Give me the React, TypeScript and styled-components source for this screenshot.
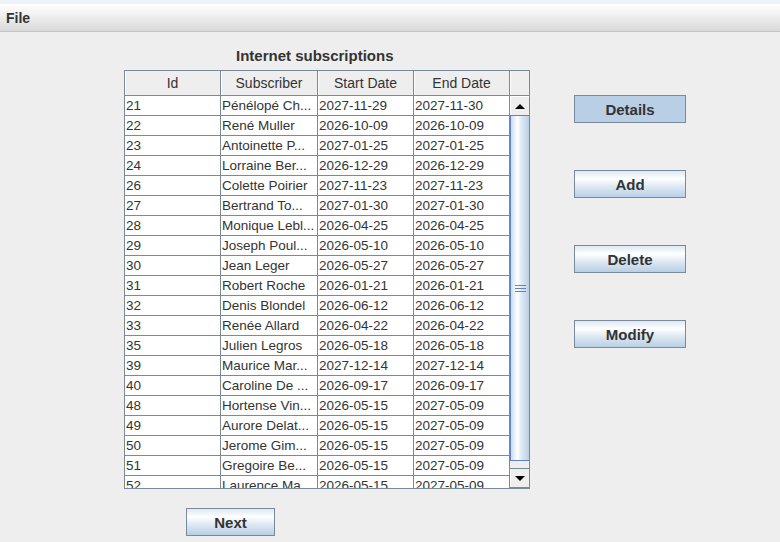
import React from 'react';
import styled, { createGlobalStyle } from 'styled-components';

const GlobalStyle = createGlobalStyle`
    html, body {
        margin: 0;
        padding: 0;
        background: #eeeeee;
        font-family: "Liberation Sans", Arial, sans-serif;
        color: #333333;
    }
`;

const Frame = styled.div`
    width: 780px;
    height: 542px;
    overflow: hidden;
    background: #eeeeee;
`;

const TopStrip = styled.div`
    height: 4px;
    background: #edf3f9;
`;

const MenuBar = styled.div`
    display: flex;
    align-items: center;
    height: 27px;
    background: linear-gradient(#ffffff, #dadada);
    border-bottom: 1px solid #c4c4c4;
`;

const MenuItem = styled.div`
    padding: 0 6px;
    font-size: 14px;
    font-weight: bold;
    color: #333333;
`;

const Main = styled.div`
    display: flex;
    padding-left: 124px;
`;

const LeftColumn = styled.div`
    display: flex;
    flex-direction: column;
    width: 406px;
`;

const Title = styled.div`
    margin: 15px 0 5px 112px;
    line-height: 18px;
    font-size: 15px;
    font-weight: bold;
    color: #333333;
`;

const ScrollPane = styled.div`
    display: grid;
    grid-template-columns: 385px 19px;
    grid-template-rows: 25px 392px;
    border: 1px solid #7a8a99;
    background: #eeeeee;
`;

const HeaderRow = styled.div`
    display: flex;
    border-bottom: 1px solid #7a8a99;
`;

const HeaderCell = styled.div<{ $w: number }>`
    width: ${p => p.$w}px;
    box-sizing: border-box;
    padding-top: 1px;
    border-right: 1px solid #7a8a99;
    box-shadow: inset 1px 0 0 #ffffff;
    text-align: center;
    font-size: 14px;
    line-height: 23px;
    color: #333333;
`;

const Corner = styled.div`
    border-bottom: 1px solid #7a8a99;
    box-shadow: inset 1px 0 0 #ffffff;
`;

const Viewport = styled.div`
    overflow: hidden;
    background: #ffffff;
`;

const Row = styled.div`
    display: flex;
`;

const Cell = styled.div<{ $w: number }>`
    width: ${p => p.$w}px;
    box-sizing: border-box;
    height: 20px;
    padding: 1px 0 0 1px;
    border-right: 1px solid #7a8a99;
    border-bottom: 1px solid #7a8a99;
    font-size: 13.5px;
    line-height: 18px;
    white-space: nowrap;
    overflow: hidden;
    color: #333333;
`;

const ScrollBar = styled.div`
    display: flex;
    flex-direction: column;
    background: #eeeeee;
`;

const ArrowButton = styled.div<{ $down?: boolean }>`
    display: flex;
    align-items: center;
    justify-content: center;
    height: ${p => (p.$down ? 20 : 19)}px;
    box-sizing: border-box;
    background: #eeeeee;
    border-top: ${p => (p.$down ? '1px solid #7a8a99' : '1px solid #ffffff')};
    border-bottom: ${p => (p.$down ? '1px solid #7a8a99' : 'none')};
    box-shadow: inset 1px 0 0 #ffffff;
`;

const Arrow = styled.div<{ $down?: boolean }>`
    width: 0;
    height: 0;
    border-left: 5px solid transparent;
    border-right: 5px solid transparent;
    ${p => (p.$down ? 'border-top: 5px solid #000;' : 'border-bottom: 5px solid #000;')}
`;

const Thumb = styled.div`
    display: flex;
    flex-direction: column;
    align-items: center;
    justify-content: center;
    gap: 2px;
    height: 346px;
    box-sizing: border-box;
    border-left: 1px solid #6382bf;
    border-top: 1px solid #6382bf;
    border-bottom: 1px solid #6382bf;
    background: linear-gradient(90deg, #c8ddf2 0%, #ffffff 35%, #dde8f3 60%, #b8cfe5 100%);
`;

const Grip = styled.div`
    width: 11px;
    height: 1px;
    background: #6382bf;
`;

const Track = styled.div`
    flex: 1;
`;

const RightColumn = styled.div`
    display: flex;
    flex-direction: column;
    gap: 47px;
    padding-top: 63px;
    margin-left: 44px;
`;

const Button = styled.button<{ $w: number; $selected?: boolean }>`
    width: ${p => p.$w}px;
    height: 28px;
    padding: 0;
    border: 1px solid #7a8a99;
    border-radius: 0;
    background: ${p =>
        p.$selected
            ? '#b8cfe5'
            : 'linear-gradient(#dde8f3 0%, #ffffff 30%, #dde8f3 60%, #b8cfe5 100%)'};
    font-family: "Liberation Sans", Arial, sans-serif;
    font-size: 15px;
    font-weight: bold;
    color: #333333;
`;

const NextButton = styled(Button)`
    margin: 19px 0 0 62px;
`;

const columns = [
    { title: 'Id', w: 96 },
    { title: 'Subscriber', w: 97 },
    { title: 'Start Date', w: 96 },
    { title: 'End Date', w: 96 },
];

const rows = [
    ['21', 'Pénélopé Ch...', '2027-11-29', '2027-11-30'],
    ['22', 'René Muller', '2026-10-09', '2026-10-09'],
    ['23', 'Antoinette P...', '2027-01-25', '2027-01-25'],
    ['24', 'Lorraine Ber...', '2026-12-29', '2026-12-29'],
    ['26', 'Colette Poirier', '2027-11-23', '2027-11-23'],
    ['27', 'Bertrand To...', '2027-01-30', '2027-01-30'],
    ['28', 'Monique Lebl...', '2026-04-25', '2026-04-25'],
    ['29', 'Joseph Poul...', '2026-05-10', '2026-05-10'],
    ['30', 'Jean Leger', '2026-05-27', '2026-05-27'],
    ['31', 'Robert Roche', '2026-01-21', '2026-01-21'],
    ['32', 'Denis Blondel', '2026-06-12', '2026-06-12'],
    ['33', 'Renée Allard', '2026-04-22', '2026-04-22'],
    ['35', 'Julien Legros', '2026-05-18', '2026-05-18'],
    ['39', 'Maurice Mar...', '2027-12-14', '2027-12-14'],
    ['40', 'Caroline De ...', '2026-09-17', '2026-09-17'],
    ['48', 'Hortense Vin...', '2026-05-15', '2027-05-09'],
    ['49', 'Aurore Delat...', '2026-05-15', '2027-05-09'],
    ['50', 'Jerome Gim...', '2026-05-15', '2027-05-09'],
    ['51', 'Gregoire Be...', '2026-05-15', '2027-05-09'],
    ['52', 'Laurence Ma...', '2026-05-15', '2027-05-09'],
];

function App() {
    return (
        <Frame>
            <GlobalStyle />
            <TopStrip />
            <MenuBar>
                <MenuItem>File</MenuItem>
            </MenuBar>
            <Main>
                <LeftColumn>
                    <Title>Internet subscriptions</Title>
                    <ScrollPane>
                        <HeaderRow>
                            {columns.map(c => (
                                <HeaderCell key={c.title} $w={c.w}>{c.title}</HeaderCell>
                            ))}
                        </HeaderRow>
                        <Corner />
                        <Viewport>
                            {rows.map(r => (
                                <Row key={r[0]}>
                                    {r.map((v, i) => (
                                        <Cell key={i} $w={columns[i].w}>{v}</Cell>
                                    ))}
                                </Row>
                            ))}
                        </Viewport>
                        <ScrollBar>
                            <ArrowButton><Arrow /></ArrowButton>
                            <Thumb>
                                <Grip />
                                <Grip />
                                <Grip />
                            </Thumb>
                            <Track />
                            <ArrowButton $down><Arrow $down /></ArrowButton>
                        </ScrollBar>
                    </ScrollPane>
                    <NextButton $w={89}>Next</NextButton>
                </LeftColumn>
                <RightColumn>
                    <Button $w={112} $selected>Details</Button>
                    <Button $w={112}>Add</Button>
                    <Button $w={112}>Delete</Button>
                    <Button $w={112}>Modify</Button>
                </RightColumn>
            </Main>
        </Frame>
    );
}

export default App;
